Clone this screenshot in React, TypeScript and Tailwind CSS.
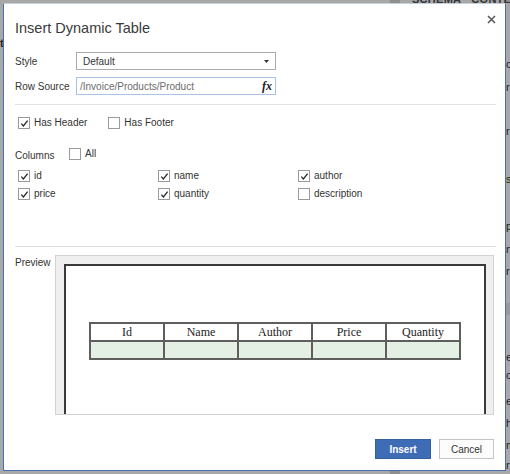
import React from "react";

function Check({ checked }: { checked: boolean }) {
  return (
    <span className="w-[12px] h-[12px] shrink-0 border border-[#9a9a9a] bg-white flex items-center justify-center">
      {checked && (
        <svg width="9" height="9" viewBox="0 0 9 9">
          <path d="M1.3 4.6 L3.4 6.9 L7.6 1.6" stroke="#262626" strokeWidth="1.3" fill="none" />
        </svg>
      )}
    </span>
  );
}

function CheckItem({ checked, label }: { checked: boolean; label: string }) {
  return (
    <div className="flex items-center gap-[4px] h-[12px]">
      <Check checked={checked} />
      <span className="text-[10px] leading-[12px] text-[#333]">{label}</span>
    </div>
  );
}

const edgeLetters: { t: number; c: string }[] = [
  { t: 58, c: "c" },
  { t: 11, c: "r" },
  { t: 32, c: "r" },
  { t: 36, c: "s" },
  { t: 35, c: "p" },
  { t: 11, c: "n" },
  { t: 10, c: "r" },
];

export default function App() {
  return (
    <div className="relative w-[510px] h-[474px] overflow-hidden bg-[#a8a8a8] font-['Liberation_Sans',Arial,sans-serif]">
      {/* backdrop page pieces */}
      <div className="absolute left-[390px] top-0 w-[10px] h-[474px] bg-[#8e8e8e]" />
      <div className="absolute left-[412px] top-[-9px] flex gap-[10px] text-[11px] font-bold text-[#333] tracking-wide">
        <span>SCHEMA</span>
        <span>CONTENT</span>
      </div>
      <div className="absolute left-0 top-[37px] text-[11px] font-bold text-[#222] leading-[12px]">t</div>
      <div className="absolute left-[506px] top-[0px] flex flex-col text-[11px] leading-[12px] text-[#222]">
        {edgeLetters.map((l, i) => (
          <span key={i} style={{ marginTop: l.t }}>
            {l.c}
          </span>
        ))}
        <span className="mt-[26px] -ml-[2px] w-[10px] h-[12px] bg-[#999]" />
        <span className="mt-[36px]">e</span>
        <span className="mt-[6px]">c</span>
        <span className="mt-[14px]">e</span>
        <span className="mt-[10px]">h</span>
        <span className="mt-[10px]">m</span>
        <span className="mt-[8px]">r</span>
      </div>

      {/* dialog */}
      <div className="absolute left-[3px] top-[3px] w-[503px] h-[468px] bg-white border border-[#4a6fae] border-t-[#c5cfe0] flex flex-col">
        {/* header */}
        <div className="flex justify-between items-start pl-[11px] pr-[9px] pt-[12px]">
          <span className="text-[14.5px] leading-[24px] text-[#3a3a3a] font-['Liberation_Sans',Arial,sans-serif]">
            Insert Dynamic Table
          </span>
          <svg width="9" height="9" viewBox="0 0 9 9" className="mt-[-1px]">
            <path d="M1 1 L8 8 M8 1 L1 8" stroke="#555" strokeWidth="1.5" />
          </svg>
        </div>

        {/* style */}
        <div className="flex items-center pl-[11px] mt-[12px] h-[18px]">
          <span className="w-[61px] text-[10px] text-[#333]">Style</span>
          <div className="w-[200px] h-[18px] border border-[#ababab] bg-white flex items-center justify-between pl-[6px] pr-[6px]">
            <span className="text-[10px] text-[#333]">Default</span>
            <svg width="5" height="3" viewBox="0 0 5 3">
              <path d="M0 0 L5 0 L2.5 3 Z" fill="#333" />
            </svg>
          </div>
        </div>

        {/* row source */}
        <div className="flex items-center pl-[11px] mt-[7px] h-[18px]">
          <span className="w-[61px] text-[10px] text-[#333]">Row Source</span>
          <div className="w-[200px] h-[18px] border border-[#a9c3e6] bg-white flex items-center justify-between pl-[3px] pr-[3px]">
            <span className="text-[10px] text-[#6b6b6b]">/Invoice/Products/Product</span>
            <span className="font-['Liberation_Serif',serif] italic font-bold text-[12px] leading-[12px] text-[#222]">
              fx
            </span>
          </div>
        </div>

        <div className="ml-[11px] mr-[9px] mt-[9px] border-t border-[#e2e2e2]" />

        {/* header/footer */}
        <div className="flex items-center pl-[14px] mt-[12px] gap-[21px]">
          <CheckItem checked={true} label="Has Header" />
          <CheckItem checked={false} label="Has Footer" />
        </div>

        {/* columns */}
        <div className="flex items-center pl-[11px] mt-[19px] h-[12px]">
          <span className="w-[54px] text-[10px] text-[#333] mt-[2px]">Columns</span>
          <CheckItem checked={false} label="All" />
        </div>

        <div className="grid grid-cols-[140px_140px_140px] pl-[14px] mt-[10px] gap-y-[6px]">
          <CheckItem checked={true} label="id" />
          <CheckItem checked={true} label="name" />
          <CheckItem checked={true} label="author" />
          <CheckItem checked={true} label="price" />
          <CheckItem checked={true} label="quantity" />
          <CheckItem checked={false} label="description" />
        </div>

        <div className="ml-[11px] mr-[9px] mt-[46px] border-t border-[#e2e2e2]" />

        {/* preview */}
        <div className="flex pl-[11px] mt-[8px]">
          <span className="w-[40px] text-[10px] leading-[14px] text-[#333] mt-[1px]">Preview</span>
          <div className="w-[439px] h-[160px] bg-[#efefef] border border-[#d2d2d2] pl-[8px] pr-[7px] pt-[8px]">
            <div className="h-full bg-white border-l-2 border-r-2 border-t-2 border-[#3a3a3a] flex justify-center pt-[56px]">
              <table className="border-collapse h-[36px] font-['Liberation_Serif',serif]">
                <tbody>
                  <tr>
                    {["Id", "Name", "Author", "Price", "Quantity"].map((h) => (
                      <td
                        key={h}
                        className="w-[74px] h-[18px] border-2 border-[#5e5e5e] text-center text-[12px] leading-[14px] text-[#222] p-0"
                      >
                        {h}
                      </td>
                    ))}
                  </tr>
                  <tr>
                    {[0, 1, 2, 3, 4].map((i) => (
                      <td key={i} className="w-[74px] h-[18px] border-2 border-[#5e5e5e] bg-[#e5f0e5] p-0" />
                    ))}
                  </tr>
                </tbody>
              </table>
            </div>
          </div>
        </div>

        {/* buttons */}
        <div className="flex justify-end gap-[8px] pr-[11px] mt-[24px]">
          <button className="w-[56px] h-[20px] bg-[#3f6db5] border border-[#34609f] text-white text-[10px] font-bold">
            Insert
          </button>
          <button className="w-[55px] h-[20px] bg-[#fcfcfc] border border-[#c4c4c4] text-[#333] text-[10px]">
            Cancel
          </button>
        </div>
      </div>
    </div>
  );
}
